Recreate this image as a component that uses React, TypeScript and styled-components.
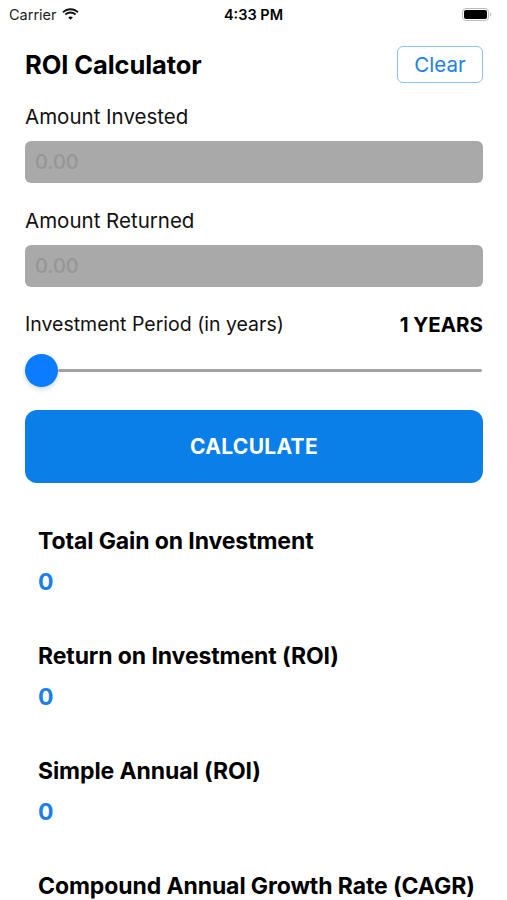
import styled, { createGlobalStyle } from "styled-components";

const GlobalStyle = createGlobalStyle`
  html, body {
    margin: 0;
    padding: 0;
    background: #ffffff;
  }
  body {
    font-family: Inter, "Noto Sans", "Liberation Sans", sans-serif;
    color: #000;
  }
  * {
    box-sizing: border-box;
  }
`;

const Screen = styled.div`
  width: 507px;
  height: 900px;
  overflow: hidden;
  background: #fff;
`;

const StatusBar = styled.div`
  height: 28px;
  display: grid;
  grid-template-columns: 1fr auto 1fr;
  align-items: center;
  padding: 0 9px;
  font-size: 14.5px;
`;

const Carrier = styled.div`
  display: flex;
  align-items: center;
  gap: 5px;
  color: #222;
`;

const Clock = styled.div`
  font-weight: 600;
  font-size: 14.5px;
`;

const BatteryWrap = styled.div`
  display: flex;
  justify-content: flex-end;
  padding-right: 6px;
`;

const Content = styled.div`
  padding: 18px 24px 0 25px;
`;

const Header = styled.div`
  display: flex;
  align-items: center;
  justify-content: space-between;
  height: 37px;
`;

const Title = styled.h1`
  margin: 0;
  font-size: 25.5px;
  font-weight: 700;
  letter-spacing: -0.1px;
`;

const ClearButton = styled.button`
  width: 86px;
  height: 37px;
  border: 1px solid #8ec0f5;
  border-radius: 6px;
  background: #fff;
  color: #1a7fe8;
  font-family: inherit;
  font-size: 20.5px;
  padding: 0;
`;

const Label = styled.div<{ $top: number }>`
  margin-top: ${(p) => p.$top}px;
  font-size: 20.5px;
  line-height: 24px;
  color: #111;
`;

const Input = styled.input`
  display: block;
  width: 458px;
  height: 42px;
  margin-top: 12px;
  border: none;
  border-radius: 6px;
  background: #a9a9a9;
  padding: 0 10px;
  font-family: inherit;
  font-size: 20px;
  font-weight: 500;
  outline: none;
  &::placeholder {
    color: #969696;
  }
`;

const PeriodRow = styled.div`
  display: flex;
  justify-content: space-between;
  align-items: center;
  margin-top: 25px;
  height: 24px;
`;

const PeriodLabel = styled.span`
  font-size: 19.5px;
  color: #111;
`;

const Years = styled.span`
  font-size: 20.5px;
  font-weight: 700;
`;

const Slider = styled.div`
  display: flex;
  align-items: center;
  margin-top: 18px;
  height: 33px;
`;

const Thumb = styled.div`
  width: 33px;
  height: 33px;
  border-radius: 50%;
  background: #0a7cff;
  box-shadow: 0 2px 5px rgba(0, 0, 0, 0.18);
  flex: none;
`;

const Track = styled.div`
  flex: 1;
  height: 3px;
  background: #a3a3a3;
  border-radius: 2px;
  margin-right: 1px;
`;

const CalcButton = styled.button`
  display: block;
  width: 458px;
  height: 73px;
  margin-top: 23px;
  border: none;
  border-radius: 12px;
  background: #0a7fe8;
  color: #fff;
  font-family: inherit;
  font-size: 21px;
  font-weight: 700;
  letter-spacing: 0.3px;
`;

const Results = styled.div`
  padding: 44px 0 0 13px;
`;

const Result = styled.div`
  height: 115px;
`;

const ResultTitle = styled.div`
  font-size: 23px;
  font-weight: 700;
  line-height: 28px;
  letter-spacing: -0.1px;
`;

const ResultValue = styled.div`
  margin-top: 13px;
  font-size: 23px;
  font-weight: 700;
  color: #1a7fe8;
  line-height: 28px;
`;

const results = [
  "Total Gain on Investment",
  "Return on Investment (ROI)",
  "Simple Annual (ROI)",
  "Compound Annual Growth Rate (CAGR)",
];

export default function App() {
  return (
    <>
      <GlobalStyle />
      <Screen>
        <StatusBar>
          <Carrier>
            Carrier
            <svg width="17" height="12" viewBox="0 0 17 12">
              <path
                d="M8.5 2.2c2.6 0 5 1 6.8 2.7l1.3-1.4C14.4 1.4 11.6.2 8.5.2S2.6 1.4.4 3.5l1.3 1.4C3.5 3.2 5.9 2.2 8.5 2.2z"
                fill="#111"
              />
              <path
                d="M8.5 5.4c1.7 0 3.3.7 4.5 1.8l1.3-1.4C12.8 4.3 10.8 3.4 8.5 3.4S4.2 4.3 2.7 5.8L4 7.2c1.2-1.1 2.8-1.8 4.5-1.8z"
                fill="#111"
              />
              <path d="M8.5 8.4c.9 0 1.7.4 2.3 1L8.5 11.8 6.2 9.4c.6-.6 1.4-1 2.3-1z" fill="#111" />
            </svg>
          </Carrier>
          <Clock>4:33 PM</Clock>
          <BatteryWrap>
            <svg width="30" height="13" viewBox="0 0 30 13">
              <rect x="0.5" y="0.5" width="26" height="12" rx="3.5" fill="none" stroke="#bbb" />
              <rect x="2" y="2" width="23" height="9" rx="2" fill="#000" />
              <path d="M28 4.5v4c.8-.3 1.3-1.1 1.3-2s-.5-1.7-1.3-2z" fill="#bbb" />
            </svg>
          </BatteryWrap>
        </StatusBar>
        <Content>
          <Header>
            <Title>ROI Calculator</Title>
            <ClearButton>Clear</ClearButton>
          </Header>
          <Label $top={22}>Amount Invested</Label>
          <Input placeholder="0.00" />
          <Label $top={26}>Amount Returned</Label>
          <Input placeholder="0.00" />
          <PeriodRow>
            <PeriodLabel>Investment Period (in years)</PeriodLabel>
            <Years>1 YEARS</Years>
          </PeriodRow>
          <Slider>
            <Thumb />
            <Track />
          </Slider>
          <CalcButton>CALCULATE</CalcButton>
          <Results>
            {results.map((r) => (
              <Result key={r}>
                <ResultTitle>{r}</ResultTitle>
                <ResultValue>0</ResultValue>
              </Result>
            ))}
          </Results>
        </Content>
      </Screen>
    </>
  );
}
